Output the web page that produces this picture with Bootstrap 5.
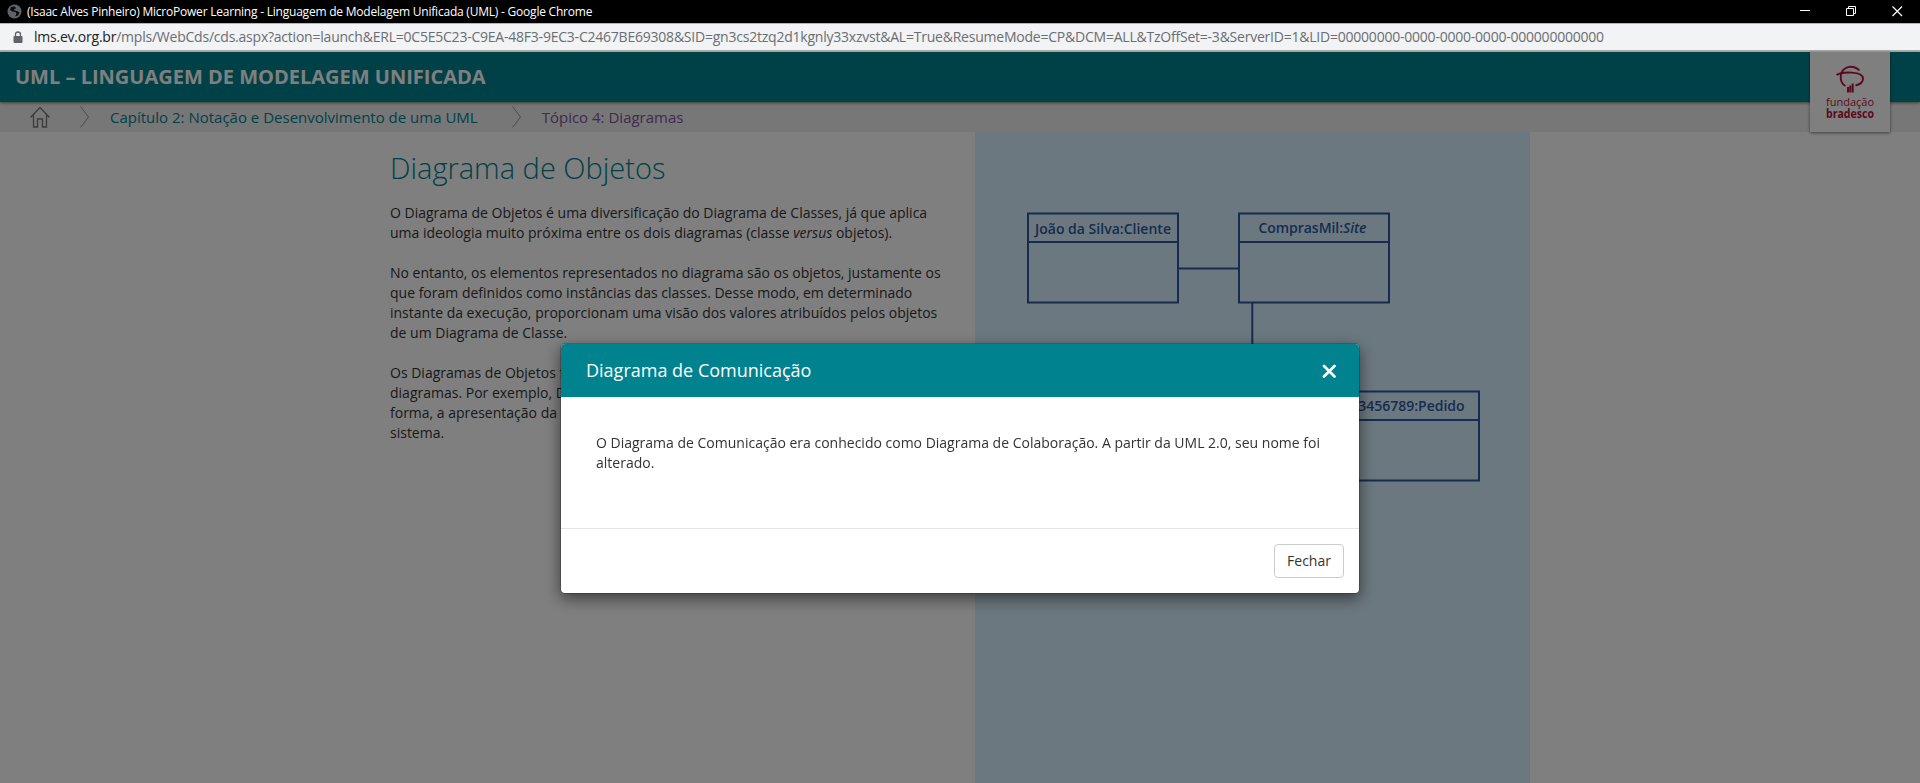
<!DOCTYPE html>
<html lang="pt-BR">
<head>
<meta charset="utf-8">
<title>Linguagem de Modelagem Unificada (UML)</title>
<link href="https://cdn.jsdelivr.net/npm/bootstrap@5.3.0/dist/css/bootstrap.min.css" rel="stylesheet">
<style>
body{font-family:"Open Sans","Noto Sans",sans-serif;font-size:14px;line-height:20px;color:#333;height:783px;overflow:hidden}
.win-title{height:23px;background:#000;color:#fff;font-size:12px;letter-spacing:-.22px;line-height:23px;padding:0 17px 0 7px}
.win-title span{margin-left:1px}
.win-btns{gap:36px}
.win-url{height:29px;background:#f1f3f4;border-top:1px solid #b4b4b4;border-bottom:2px solid #b1b1b1;letter-spacing:-.224px;color:#6a6e73;padding-left:13px;white-space:nowrap}
.win-url svg{margin-right:10px}
.win-url b{font-weight:400;color:#202124}
.course-bar{height:50px;background:#00838f;color:#fff;font-size:20px;font-weight:700;padding-left:15px;box-shadow:0 1px 3px rgba(0,0,0,.5);position:relative}
.crumbs{height:30px;background:#eee;font-size:15px;color:#00838f}
.crumbs .topic{color:#80559a}
.brand-card{position:absolute;right:30px;top:0;width:80px;height:80px;background:#fff;box-shadow:0 1px 3px rgba(0,0,0,.5)}
.brand-card svg{display:block}
.lesson{width:1140px;margin:0 auto;height:651px}
.lesson-text{width:585px;padding:18px 0 0}
.lesson h1{font-size:29px;line-height:36px;font-weight:300;color:#00838f;margin:0 0 17px}
.lesson p{margin:0 0 20px;white-space:nowrap}
.lesson-fig{width:555px;background:#d8f1ff}
.modal{top:52px;height:731px}
.modal-backdrop{top:52px;height:731px}
.modal-dialog{width:800px;max-width:none;margin:291px auto 0 560px}
.modal-content{border:1px solid rgba(0,0,0,.2);background-clip:padding-box;border-radius:5px;box-shadow:0 5px 15px rgba(0,0,0,.5)}
.modal-header{height:53px;background:#00838f;color:#fff;padding:0 22px 0 25px;border:0;border-radius:4px 4px 0 0}
.modal-title{font-size:18px;line-height:24px;font-weight:500;padding-bottom:1px}
.modal-body{height:131px;padding:36px 35px 0;white-space:nowrap}
.modal-footer{height:65px;padding:0 15px;border-top:1px solid #e5e5e5}
.modal-footer .btn{width:70px;height:34px;margin:0;padding:0 0 1px;font-size:14px;border:1px solid #ccc;border-radius:4px;color:#333;background:#fff}
</style>
</head>
<body>
<div class="win-title d-flex align-items-center justify-content-between">
  <div class="d-flex align-items-center">
    <svg class="me-1" width="15" height="15" viewBox="0 0 15 15"><circle cx="7.500" cy="7.500" r="7" fill="#5f6368"/><path d="M8 2.500l-4 .5-1 3 2.500 1.500 3 .5 1 2-1.500 2.500 3-1 1.500-3-2.500-1.500-2.500-.5-.5-1.500 2-.5z" fill="#0b0b0b"/></svg>
    <span>(Isaac Alves Pinheiro) MicroPower Learning - Linguagem de Modelagem Unificada (UML) - Google Chrome</span>
  </div>
  <div class="win-btns d-flex align-items-center">
    <svg width="10" height="11" viewBox="0 0 10 11"><path d="M0 4.500h10" stroke="#fff"/></svg>
    <svg width="10" height="11" viewBox="0 0 10 11" fill="none" stroke="#fff"><path d="M.5 2.500h7v7h-7zM2.500 2.500v-2h7v7h-2"/></svg>
    <svg width="11" height="11" viewBox="0 0 11 11"><path d="M.5.500l9.500 9.500M10 .500l-9.500 9.500" stroke="#fff" stroke-width="1.200"/></svg>
  </div>
</div>
<div class="win-url d-flex align-items-center">
  <svg width="11" height="13" viewBox="0 0 11 13"><rect x=".5" y="5" width="9" height="7" rx="1" fill="#5f6368"/><path d="M2.500 5V3.500a2.500 2.500 0 0 1 5 0V5" fill="none" stroke="#5f6368" stroke-width="1.300"/></svg>
  <span><b>lms.ev.org.br</b>/mpls/WebCds/cds.aspx?action=launch&amp;ERL=0C5E5C23-C9EA-48F3-9EC3-C2467BE69308&amp;SID=gn3cs2tzq2d1kgnly33xzvst&amp;AL=True&amp;ResumeMode=CP&amp;DCM=ALL&amp;TzOffSet=-3&amp;ServerID=1&amp;LID=00000000-0000-0000-0000-000000000000</span>
</div>
<header class="course-bar d-flex align-items-center">
  <span>UML – LINGUAGEM DE MODELAGEM UNIFICADA</span>
  <div class="brand-card">
    <svg width="80" height="80" viewBox="0 0 80 80" fill="none" stroke="#b5123d">
      <path d="M26.500 23C32 19.500 53 19 53 26.500C53 30 50 32.500 45.500 33.500" stroke-width="2"/>
      <path d="M35.500 34C28.500 30 29 18 38 15.200C42 14 47 15.500 49.500 18.500" stroke-width="1.900"/>
      <path d="M38 35v5.500M40.300 33.500v7M42.700 31.500v9" stroke-width="2"/>
      <g fill="#b5123d" stroke="none" font-family="Open Sans, sans-serif" font-size="11.500"><text x="16" y="54" textLength="48" lengthAdjust="spacingAndGlyphs" font-weight="400">fundação</text><text x="16" y="66" textLength="48" lengthAdjust="spacingAndGlyphs" font-weight="700">bradesco</text></g>
    </svg>
  </div>
</header>
<nav class="crumbs d-flex align-items-center">
  <svg width="110" height="30" viewBox="0 0 110 30" fill="none" stroke="#777" stroke-width="1.300"><path d="M30.500 15.500L40 5.500l9.500 10M33.500 13v12h4v-8h5v8h4V13"/><path d="M80.500 4.500l8 10.500-8 10.500" stroke="#999" stroke-width="1"/></svg>
  <span>Capítulo 2: Notação e Desenvolvimento de uma UML</span>
  <svg width="64" height="30" viewBox="0 0 64 30" fill="none" stroke="#999"><path d="M34.500 4.500l8 10.500-8 10.500"/></svg>
  <span class="topic">Tópico 4: Diagramas</span>
</nav>
<main class="lesson d-flex">
  <section class="lesson-text">
    <h1>Diagrama de Objetos</h1>
    <p>O Diagrama de Objetos é uma diversificação do Diagrama de Classes, já que aplica<br>uma ideologia muito próxima entre os dois diagramas (classe <i>versus</i> objetos).</p>
    <p>No entanto, os elementos representados no diagrama são os objetos, justamente os<br>que foram definidos como instâncias das classes. Desse modo, em determinado<br>instante da execução, proporcionam uma visão dos valores atribuídos pelos objetos<br>de um Diagrama de Classe.</p>
    <p>Os Diagramas de Objetos f<br>diagramas. Por exemplo, D<br>forma, a apresentação da<br>sistema.</p>
  </section>
  <section class="lesson-fig">
    <svg width="555" height="651" viewBox="975 132 555 651" fill="none" stroke="#2f57a0" stroke-width="2">
      <path d="M1028 213.500h150v89h-150zM1028 242h150M1239 213.500h150v89h-150zM1239 242h150M1178 268.500h61M1252.300 303v88.500M1329 391.500h150v89h-150zM1329 420h150"/>
      <g fill="#2f57a0" stroke="none" font-family="Open Sans, sans-serif" font-weight="600" font-size="14">
        <text x="1035" y="234" textLength="136">João da Silva:Cliente</text>
        <text x="1258.500" y="232.700" textLength="108">ComprasMil:<tspan font-style="italic">Site</tspan></text>
        <text x="1464.600" y="410.700" text-anchor="end">123456789:Pedido</text>
      </g>
    </svg>
  </section>
</main>
<div class="modal-backdrop show"></div>
<div class="modal d-block" tabindex="-1" role="dialog">
  <div class="modal-dialog">
    <div class="modal-content">
      <div class="modal-header">
        <h4 class="modal-title">Diagrama de Comunicação</h4>
        <svg width="15" height="15" viewBox="0 0 15 15"><path d="M2 3l10.500 10.500M12.500 3l-10.500 10.500" stroke="#fff" stroke-width="2.700" stroke-linecap="round"/></svg>
      </div>
      <div class="modal-body">O Diagrama de Comunicação era conhecido como Diagrama de Colaboração. A partir da UML 2.0, seu nome foi<br>alterado.</div>
      <div class="modal-footer"><button type="button" class="btn">Fechar</button></div>
    </div>
  </div>
</div>
<script src="https://cdn.jsdelivr.net/npm/bootstrap@5.3.0/dist/js/bootstrap.bundle.min.js"></script>
</body>
</html>
